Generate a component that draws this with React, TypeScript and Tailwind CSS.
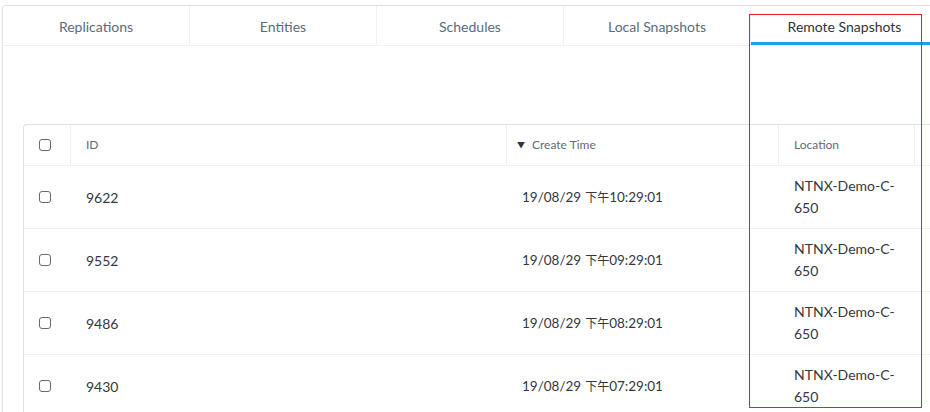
import React from "react";

const tabs = ["Replications", "Entities", "Schedules", "Local Snapshots", "Remote Snapshots"];

const rows = [
  { id: "9622", date: "19/08/29", clock: "10:29:01", location: "NTNX-Demo-C-650" },
  { id: "9552", date: "19/08/29", clock: "09:29:01", location: "NTNX-Demo-C-650" },
  { id: "9486", date: "19/08/29", clock: "08:29:01", location: "NTNX-Demo-C-650" },
  { id: "9430", date: "19/08/29", clock: "07:29:01", location: "NTNX-Demo-C-650" },
];

function Checkbox() {
  return <span className="block h-[12px] w-[12px] rounded-[3px] border border-[#5f6b78] bg-white" />;
}

export default function App() {
  return (
    <div
      className="relative h-[412px] w-[930px] overflow-hidden bg-white"
      style={{ fontFamily: "Lato, 'Noto Sans CJK SC', sans-serif" }}
    >
      <div className="ml-[2px] mt-[5px] h-[420px] w-[960px] rounded-tl-[4px] border-l border-t border-[#dde2e8]">
        {/* tabs */}
        <div className="flex h-[40px] border-b border-[#eef0f3]">
          {tabs.map((t, i) => {
            const active = i === tabs.length - 1;
            return (
              <div
                key={t}
                className={`flex w-[187px] shrink-0 items-center justify-center text-[14px] ${
                  active
                    ? "border-b-[3px] border-[#1fa0ec] pt-[4px] text-[#2f343b]"
                    : "border-r border-[#eef0f3] pt-[2px] text-[#5c6b7d]"
                }`}
              >
                {t}
              </div>
            );
          })}
        </div>

        {/* table */}
        <div className="ml-[20px] mt-[78px] rounded-tl-[4px] border-l border-t border-[#dde2e8]">
          <div className="grid h-[41px] grid-cols-[47px_436px_272px_136px_1fr] border-b border-[#eef0f3] text-[12px] text-[#5c6b7d]">
            <div className="flex items-center border-r border-[#eef0f3] pl-[15px]">
              <Checkbox />
            </div>
            <div className="flex items-center border-r border-[#eef0f3] pl-[15px]">ID</div>
            <div className="flex items-center gap-[7px] border-r border-[#eef0f3] pl-[10px]">
              <span className="text-[8px] text-[#2f343b]">▼</span>
              <span>Create Time</span>
            </div>
            <div className="flex items-center border-r border-[#eef0f3] pl-[15px]">Location</div>
            <div />
          </div>
          {rows.map((r) => (
            <div
              key={r.id}
              className="grid h-[63px] grid-cols-[47px_436px_272px_136px_1fr] border-b border-[#eef0f3] text-[14px] text-[#33383f]"
            >
              <div className="flex items-center pl-[15px]">
                <Checkbox />
              </div>
              <div className="flex items-center pl-[15px]">{r.id}</div>
              <div className="flex items-center gap-[4px] pl-[15px] text-[13.5px]">
                <span>{r.date}</span>
                <span>
                  <span className="text-[12px]">下午</span>
                  {r.clock}
                </span>
              </div>
              <div className="flex items-center pl-[15px] pr-[18px] leading-[22px]">{r.location}</div>
              <div />
            </div>
          ))}
        </div>
      </div>

      {/* highlight annotation */}
      <div className="absolute left-[749px] top-[14px] h-[394px] w-[173px] border-[1.5px] border-[#e0232b]" />
    </div>
  );
}
